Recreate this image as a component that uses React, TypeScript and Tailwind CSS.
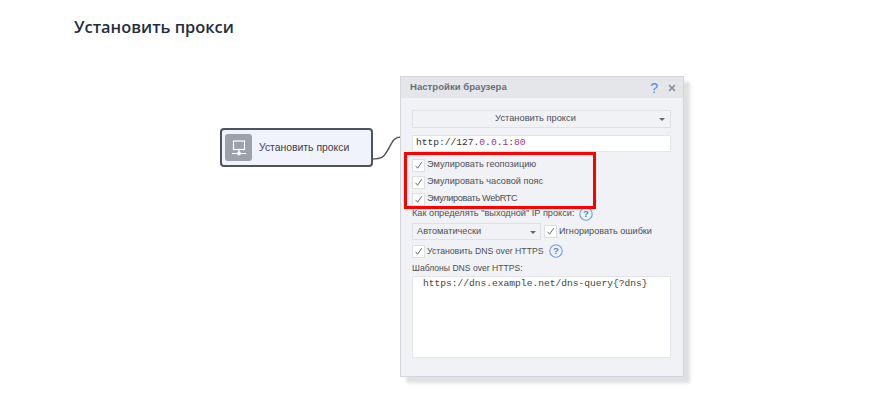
import React from "react";

const ui = "font-['Liberation_Sans',Arial,sans-serif]";

function Help({ size = 14 }: { size?: number }) {
  return (
    <svg width={size} height={size} viewBox="0 0 14 14" className="shrink-0">
      <circle cx="7" cy="7" r="6.2" fill="none" stroke="#6f9fd8" strokeWidth="1.1" />
      <text x="7" y="10.4" textAnchor="middle" fontSize="9.5" fontWeight="700" fill="#4a86cf" fontFamily="Liberation Sans, sans-serif">?</text>
    </svg>
  );
}

function Check({ label, size = "text-[9.2px]" }: { label: string; size?: string }) {
  return (
    <div className="flex items-center gap-[2px] h-[16px]">
      <div className="w-[13px] h-[13px] bg-white border border-[#dcdfe5] flex items-center justify-center shrink-0">
        <svg width="9" height="9" viewBox="0 0 9 9">
          <path d="M1.5 4.8 L3.6 7.2 L7.8 1.2" fill="none" stroke="#555a60" strokeWidth="0.9" />
        </svg>
      </div>
      <span className={`${size} leading-none text-[#4b4f55] whitespace-nowrap`}>{label}</span>
    </div>
  );
}

function Caret() {
  return <div className="w-0 h-0 border-x-[3px] border-x-transparent border-t-[3px] border-t-[#666]" />;
}

export default function App() {
  return (
    <div className="relative w-[892px] h-[414px] bg-white overflow-hidden">
      <h1 className="absolute left-[74px] top-[15px] text-[16.4px] leading-[24px] font-semibold text-[#1f2d3d] font-['Open_Sans',sans-serif] whitespace-nowrap">
        Установить прокси
      </h1>

      {/* connector */}
      <svg className="absolute left-[370px] top-[130px]" width="34" height="34" viewBox="0 0 34 34">
        <path d="M2 29 C 14 29, 14 26, 19 18 C 23 10, 25 7, 31 7" fill="none" stroke="#50555c" strokeWidth="1.5" />
      </svg>

      {/* node */}
      <div className={`${ui} absolute left-[220px] top-[128px] w-[153px] h-[39px] rounded-[4px] border-2 border-[#4f545b] bg-[#f0f3fb] flex items-center pl-[3px] gap-[7px]`}>
        <div className="w-[27px] h-[27px] rounded-[3px] bg-[#9ca1ab] flex items-center justify-center">
          <svg width="18" height="18" viewBox="0 0 18 18" fill="none" stroke="#fff" strokeWidth="1.2">
            <rect x="3.5" y="2" width="11" height="8.5" />
            <path d="M9 10.5 V14 M2 14.5 H16" />
            <circle cx="9" cy="14.5" r="1.3" fill="#fff" />
          </svg>
        </div>
        <span className="text-[10.4px] text-[#3c4046] whitespace-nowrap">Установить прокси</span>
      </div>

      {/* dialog */}
      <div className={`${ui} absolute left-[400px] top-[76px] w-[284px] h-[301px] bg-[#f1f2f6] border border-[#d3d6dd] shadow-[6px_6px_3px_0_rgba(150,152,155,0.3)] flex flex-col`}>
        <div className="h-[21px] bg-[#e4e6ea] flex items-center justify-between pl-[9px] pr-[7px] shrink-0">
          <span className="text-[9.6px] font-bold text-[#6a7078]">Настройки браузера</span>
          <div className="flex items-center gap-[10px]">
            <span className="text-[14px] leading-none text-[#4a90d6]">?</span>
            <svg width="8" height="8" viewBox="0 0 8 8" stroke="#7d838a" strokeWidth="1.4"><path d="M1 1 L7 7 M7 1 L1 7" /></svg>
          </div>
        </div>

        <div className="flex flex-col pl-[11px] pr-[12px] pt-[12px] flex-1">
          <div className="relative h-[18px] bg-[#f1f2f6] border border-[#dfe1e6] flex items-center justify-center pr-[12px]">
            <span className="text-[9.3px] text-[#4b4f55]">Установить прокси</span>
            <div className="absolute right-[5px] top-[7px]"><Caret /></div>
          </div>

          <div className="mt-[7px] h-[17px] bg-white border border-[#e3e5ea] flex items-center pl-[3px] text-[9.6px] font-['Liberation_Mono',monospace] text-[#333] whitespace-nowrap">
            http://127.<span className="text-[#a02fa0]">0</span>.<span className="text-[#a02fa0]">0</span>.<span className="text-[#a02fa0]">1</span>:<span className="text-[#a02fa0]">80</span>
          </div>

          <div className="relative mt-[2px] pt-[3px] flex flex-col gap-[1px]">
            <Check label="Эмулировать геопозицию" />
            <Check label="Эмулировать часовой пояс" />
            <Check label="Эмулировать WebRTC" size="text-[9.2px] tracking-[-0.35px]" />
            <div className="absolute -left-[8px] top-[-2px] w-[192px] h-[57px] border-[3px] border-[#ff0000]" />
          </div>

          <div className="flex items-center gap-[5px] h-[14px]">
            <span className="text-[9.2px] text-[#4b4f55] whitespace-nowrap">Как определять "выходной" IP прокси:</span>
            <Help />
          </div>

          <div className="mt-[2px] flex items-center gap-[3px]">
            <div className="relative w-[129px] h-[17px] bg-[#f1f2f6] border border-[#dfe1e6] flex items-center pl-[4px]">
              <span className="text-[9.2px] text-[#4b4f55]">Автоматически</span>
              <div className="absolute right-[4px] top-[7px]"><Caret /></div>
            </div>
            <Check label="Игнорировать ошибки" size="text-[9.1px]" />
          </div>

          <div className="mt-[3px] flex items-center gap-[5px] h-[16px]">
            <Check label="Установить DNS over HTTPS" size="text-[8.7px]" />
            <Help />
          </div>

          <div className="mt-[2px] text-[8.6px] leading-[14px] text-[#4b4f55]">Шаблоны DNS over HTTPS:</div>

          <div className="mt-[1px] h-[82px] bg-white border border-[#e3e5ea] pl-[10px] text-[9.6px] leading-[13px] font-['Liberation_Mono',monospace] text-[#444] whitespace-nowrap">
            https://dns.example.net/dns-query&#123;?dns&#125;
          </div>
        </div>
      </div>
    </div>
  );
}
